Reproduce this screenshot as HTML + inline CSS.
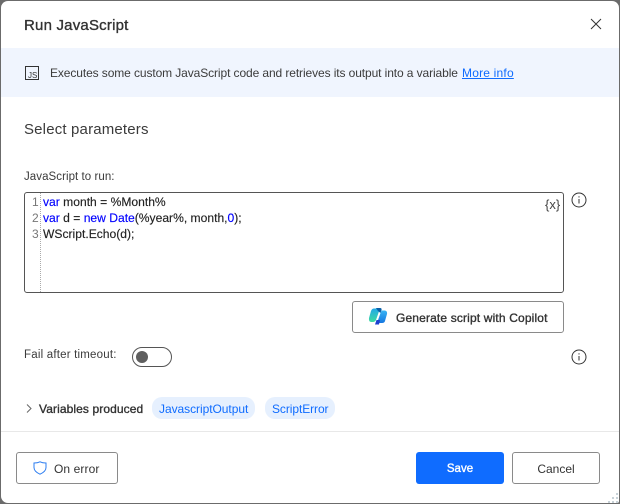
<!DOCTYPE html>
<html><head><meta charset="utf-8"><style>
*{box-sizing:border-box}
html,body{margin:0;padding:0;width:620px;height:504px;overflow:hidden;background:#6b6b6b}
body{position:relative;font-family:"Liberation Sans",sans-serif;color:#333}
#d{position:absolute;left:1px;top:1px;width:618px;height:502px;background:#fff;border-radius:7px 7px 2px 7px;overflow:hidden}
.t{position:absolute;white-space:nowrap;line-height:16px;font-size:12px}
.s{-webkit-text-stroke:.35px currentColor}
.a{position:absolute}
.btn{position:absolute;border:1px solid #8a8a8a;border-radius:3px;background:#fff}
</style></head><body>
<div id="d"></div>
<div class="t s" style="left:24px;top:18px;font-size:15px;color:#323232;letter-spacing:.2px">Run JavaScript</div>
<svg class="a" style="left:590px;top:18px" width="12" height="12" viewBox="0 0 12 12"><path d="M1 1L11 11M11 1L1 11" stroke="#333" stroke-width="1" fill="none"/></svg>
<div class="a" style="left:1px;top:48px;width:618px;height:49px;background:#f0f5fe"></div>
<div class="a" style="left:25px;top:66px;width:14px;height:14px;border:1px solid #333"></div>
<div class="t" style="left:28px;top:71px;font-size:8px;line-height:9px;color:#333">JS</div>
<div class="t" style="left:50px;top:65px;color:#3b3b3b;letter-spacing:-.1px">Executes some custom JavaScript code and retrieves its output into a variable</div>
<div class="t" style="left:462px;top:65px;color:#0f6cff;text-decoration:underline;letter-spacing:.2px">More info</div>
<div class="t" style="left:24px;top:121px;font-size:15px;line-height:18px;color:#3b3b3b;letter-spacing:.17px">Select parameters</div>
<div class="t" style="left:24px;top:169px;font-size:11.5px;color:#3b3b3b;letter-spacing:.06px">JavaScript to run:</div>
<div class="a" style="left:24px;top:192px;width:540px;height:101px;border:1px solid #555;border-radius:3px;background:#fff"></div>
<div class="a" style="left:40px;top:193px;width:0;height:99px;border-left:1px dotted #aaa"></div>
<div class="t" style="left:32px;top:194px;font-size:12px;line-height:16px;color:#777">1<br>2<br>3</div>
<div class="t" style="left:43px;top:194px;font-size:12.1px;line-height:16px;color:#222;-webkit-text-stroke:.15px currentColor"><span style="color:#00f">var</span> month = %Month%<br><span style="color:#00f">var</span> d = <span style="color:#00f">new Date</span>(%year%, month,<span style="color:#00f">0</span>);<br>WScript.Echo(d);</div>
<div class="t" style="left:545px;top:197px;font-size:13px;color:#444">{x}</div>
<svg class="a" style="left:571px;top:192px" width="16" height="16" viewBox="0 0 16 16"><circle cx="8" cy="8" r="7" fill="none" stroke="#333"/><path d="M8 7v4.500M8 4.200v1.300" stroke="#333" fill="none"/></svg>
<div class="btn" style="left:352px;top:301px;width:212px;height:32px"></div>
<svg class="a" style="left:368px;top:307px" width="20" height="19" viewBox="0 0 20 19"><defs><linearGradient id="g1" x1="0" y1="0" x2="0" y2="1"><stop offset="0" stop-color="#22a8e8"/><stop offset="1" stop-color="#3fdca0"/></linearGradient><linearGradient id="g2" x1="0" y1="0" x2="0" y2="1"><stop offset="0" stop-color="#38b4f4"/><stop offset="1" stop-color="#1577e0"/></linearGradient></defs><path d="M6 1.500h6L8 13q-1 2-3 2H3Q0.500 14.500 1 11L3 4Q4 1.500 6 1.500z" fill="url(#g1)"/><path d="M8 1h4q2 0 1.500 2L12.500 6 10 4z" fill="#0b5fa8"/><path d="M13.500 3.500h3.500q2.500.5 2 3.500l-2 7q-.5 2-3 2H9L12.500 6z" fill="url(#g2)"/><path d="M7 17.500l1.500-4.500h3.500l-1 4.500z" fill="#1b3fd0"/></svg>
<div class="t s" style="left:396px;top:310px;font-size:12px;color:#333;letter-spacing:.15px">Generate script with Copilot</div>
<div class="t" style="left:24px;top:347px;font-size:11.5px;color:#3b3b3b;letter-spacing:.2px">Fail after timeout:</div>
<div class="a" style="left:132px;top:347px;width:40px;height:20px;border:1px solid #555;border-radius:10px;background:#fff"></div>
<div class="a" style="left:136px;top:351px;width:12px;height:12px;border-radius:50%;background:#5f5f5f"></div>
<svg class="a" style="left:571px;top:349px" width="16" height="16" viewBox="0 0 16 16"><circle cx="8" cy="8" r="7" fill="none" stroke="#333"/><path d="M8 7v4.500M8 4.200v1.300" stroke="#333" fill="none"/></svg>
<svg class="a" style="left:25px;top:403px" width="8" height="11" viewBox="0 0 8 11"><path d="M2 1.500l4 4-4 4" stroke="#666" fill="none"/></svg>
<div class="t s" style="left:39px;top:401px;font-size:12px;color:#333;letter-spacing:.1px">Variables produced</div>
<div class="a" style="left:152px;top:397px;width:103px;height:22px;background:#e6f0fe;border-radius:10px"></div>
<div class="t" style="left:159px;top:401px;color:#0f6cff;letter-spacing:-.05px">JavascriptOutput</div>
<div class="a" style="left:265px;top:397px;width:70px;height:22px;background:#e6f0fe;border-radius:10px"></div>
<div class="t" style="left:272px;top:401px;color:#0f6cff;letter-spacing:-.08px">ScriptError</div>
<div class="a" style="left:1px;top:431px;width:618px;height:1px;background:#e8e8e8"></div>
<div class="btn" style="left:16px;top:452px;width:102px;height:32px"></div>
<svg class="a" style="left:33px;top:461px" width="14" height="14" viewBox="0 0 14 14"><path d="M1 2Q4.500 2 7 .8 9.500 2 13 2V6.500Q13 10.500 7 13.200 1 10.500 1 6.500z" fill="none" stroke="#2b7cf0" stroke-width="1"/></svg>
<div class="t" style="left:54px;top:461px;color:#333;font-size:12px;letter-spacing:.1px">On error</div>
<div class="a" style="left:416px;top:452px;width:88px;height:32px;background:#0f6cff;border-radius:3px"></div>
<div class="t s" style="left:416px;top:461px;width:88px;text-align:center;color:#fff;font-size:11.5px">Save</div>
<div class="btn" style="left:512px;top:452px;width:88px;height:32px"></div>
<div class="t" style="left:512px;top:461px;width:88px;text-align:center;color:#333">Cancel</div>
<svg class="a" style="left:608px;top:492px" width="11" height="11" viewBox="0 0 11 11" fill="#c8d2d8"><rect x="8" y="1" width="2" height="2"/><rect x="8" y="5" width="2" height="2"/><rect x="4" y="5" width="2" height="2"/><rect x="8" y="9" width="2" height="2"/><rect x="4" y="9" width="2" height="2"/><rect x="0" y="9" width="2" height="2"/></svg>
</body></html>
